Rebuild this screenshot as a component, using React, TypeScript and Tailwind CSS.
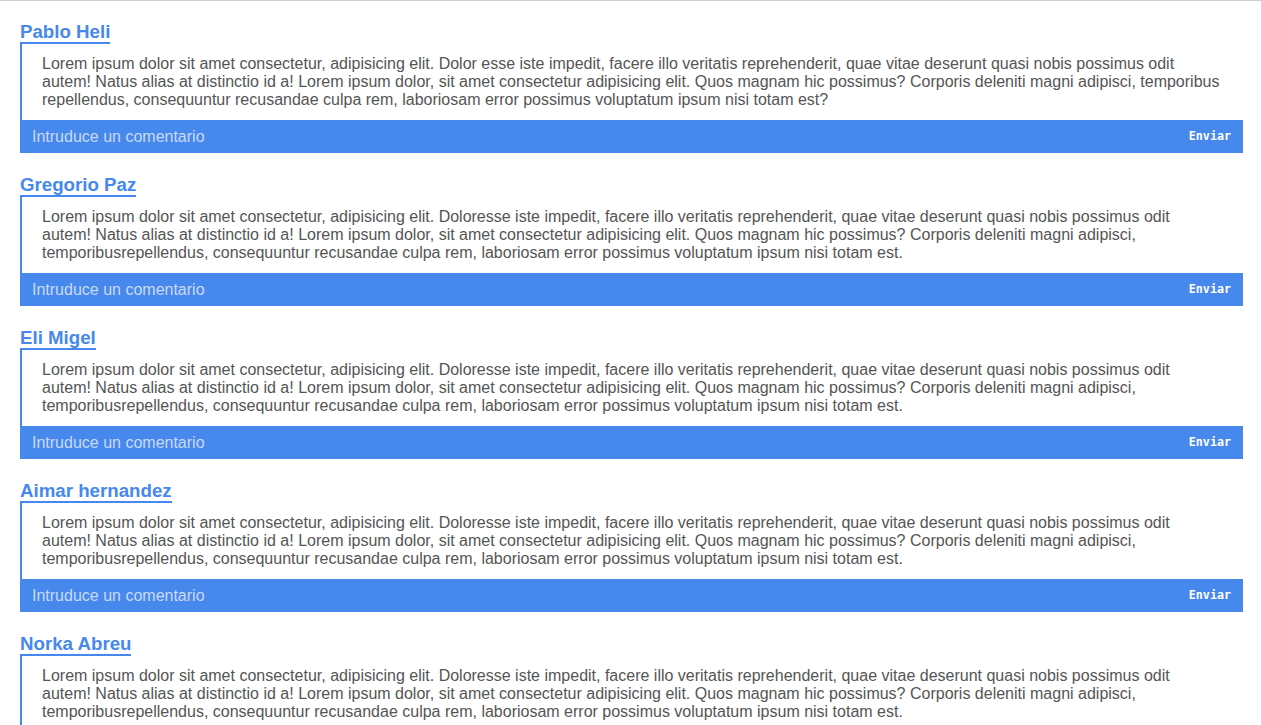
const comments = [
  {
    name: "Pablo Heli",
    text: "Lorem ipsum dolor sit amet consectetur, adipisicing elit. Dolor esse iste impedit, facere illo veritatis reprehenderit, quae vitae deserunt quasi nobis possimus odit autem! Natus alias at distinctio id a! Lorem ipsum dolor, sit amet consectetur adipisicing elit. Quos magnam hic possimus? Corporis deleniti magni adipisci, temporibus repellendus, consequuntur recusandae culpa rem, laboriosam error possimus voluptatum ipsum nisi totam est?",
  },
  {
    name: "Gregorio Paz",
    text: "Lorem ipsum dolor sit amet consectetur, adipisicing elit. Doloresse iste impedit, facere illo veritatis reprehenderit, quae vitae deserunt quasi nobis possimus odit autem! Natus alias at distinctio id a! Lorem ipsum dolor, sit amet consectetur adipisicing elit. Quos magnam hic possimus? Corporis deleniti magni adipisci, temporibusrepellendus, consequuntur recusandae culpa rem, laboriosam error possimus voluptatum ipsum nisi totam est.",
  },
  {
    name: "Eli Migel",
    text: "Lorem ipsum dolor sit amet consectetur, adipisicing elit. Doloresse iste impedit, facere illo veritatis reprehenderit, quae vitae deserunt quasi nobis possimus odit autem! Natus alias at distinctio id a! Lorem ipsum dolor, sit amet consectetur adipisicing elit. Quos magnam hic possimus? Corporis deleniti magni adipisci, temporibusrepellendus, consequuntur recusandae culpa rem, laboriosam error possimus voluptatum ipsum nisi totam est.",
  },
  {
    name: "Aimar hernandez",
    text: "Lorem ipsum dolor sit amet consectetur, adipisicing elit. Doloresse iste impedit, facere illo veritatis reprehenderit, quae vitae deserunt quasi nobis possimus odit autem! Natus alias at distinctio id a! Lorem ipsum dolor, sit amet consectetur adipisicing elit. Quos magnam hic possimus? Corporis deleniti magni adipisci, temporibusrepellendus, consequuntur recusandae culpa rem, laboriosam error possimus voluptatum ipsum nisi totam est.",
  },
  {
    name: "Norka Abreu",
    text: "Lorem ipsum dolor sit amet consectetur, adipisicing elit. Doloresse iste impedit, facere illo veritatis reprehenderit, quae vitae deserunt quasi nobis possimus odit autem! Natus alias at distinctio id a! Lorem ipsum dolor, sit amet consectetur adipisicing elit. Quos magnam hic possimus? Corporis deleniti magni adipisci, temporibusrepellendus, consequuntur recusandae culpa rem, laboriosam error possimus voluptatum ipsum nisi totam est.",
  },
];

function Comment({ name, text }: { name: string; text: string }) {
  return (
    <div className="mb-5">
      <h3 className="w-fit border-b-2 border-[#4688eb] text-[18.7px] leading-[21px] font-bold text-[#4688eb] pt-[1px]">
        {name}
      </h3>
      <div className="border-l-2 border-[#4688eb] pl-5 pr-5 pt-[11px] pb-[11px]">
        <p className="text-[16px] leading-[18px] text-[#555]">{text}</p>
      </div>
      <form
        className="flex items-center bg-[#4688eb] h-[33px]"
        onSubmit={(e) => e.preventDefault()}
      >
        <input
          type="text"
          placeholder="Intruduce un comentario"
          className="flex-1 bg-transparent pl-3 text-[16px] text-white placeholder:text-[#c9daf8] outline-none"
        />
        <button
          type="submit"
          className="px-3 text-[11.7px] font-bold text-white"
          style={{ fontFamily: '"DejaVu Sans Mono", "Liberation Mono", monospace' }}
        >
          Enviar
        </button>
      </form>
    </div>
  );
}

export default function App() {
  return (
    <div
      className="min-h-screen bg-white border-t border-[#cfcfcf] pt-[19px] pl-5 pr-[18px]"
      style={{ fontFamily: '"Liberation Sans", Arial, sans-serif' }}
    >
      {comments.map((c, i) => (
        <Comment key={i} name={c.name} text={c.text} />
      ))}
    </div>
  );
}
